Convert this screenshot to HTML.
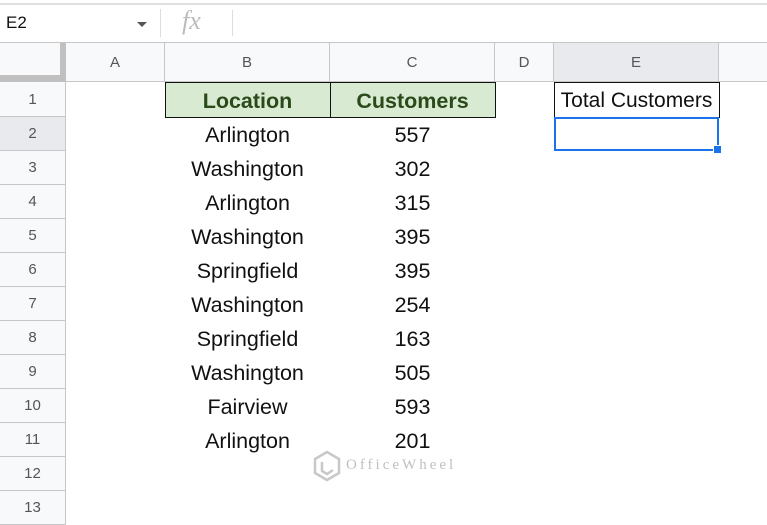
<!DOCTYPE html>
<html><head><style>
body{margin:0;width:767px;height:504px;overflow:hidden;background:#fff;font-family:"Liberation Sans",Arial,sans-serif;position:relative}
.a{position:absolute;box-sizing:border-box}
.ch{position:absolute;top:43px;height:39px;background:#f8f9fa;border-right:1px solid #c7c7c7;border-bottom:1px solid #c7c7c7;color:#555;font-size:15px;text-align:center;line-height:39px;box-sizing:border-box}
.rh{position:absolute;left:0;width:66px;height:34px;background:#f8f9fa;border-right:1px solid #c7c7c7;border-bottom:1px solid #c7c7c7;color:#555;font-size:15px;text-align:center;line-height:34px;box-sizing:border-box}
.t{position:absolute;font-size:21.5px;color:#111;text-align:center;height:34px;line-height:36px;white-space:nowrap}
</style></head><body>
<div class="a" style="left:0;top:3px;width:767px;height:2px;background:#e0e0e0"></div>
<div class="a" style="left:6px;top:13px;font-size:17px;color:#111">E2</div>
<div class="a" style="left:137px;top:22px;width:0;height:0;border-left:5px solid transparent;border-right:5px solid transparent;border-top:5px solid #555"></div>
<div class="a" style="left:160px;top:9px;width:1px;height:28px;background:#ddd"></div>
<div class="a" style="left:182px;top:6px;font-size:26px;font-style:italic;color:#bbb;font-family:'Liberation Serif',serif">fx</div>
<div class="a" style="left:232px;top:10px;width:1px;height:26px;background:#ddd"></div>
<div class="a" style="left:0;top:42px;width:767px;height:1px;background:#c7c7c7"></div>
<div class="ch" style="left:0;width:66px;background:#f8f9fa;border:none"></div>
<div class="a" style="left:60px;top:43px;width:6px;height:39px;background:#c0c0c0"></div>
<div class="a" style="left:0;top:75px;width:66px;height:7px;background:#c0c0c0"></div>
<div class="ch" style="left:66px;width:99px">A</div>
<div class="ch" style="left:165px;width:165px">B</div>
<div class="ch" style="left:330px;width:165px">C</div>
<div class="ch" style="left:495px;width:59px">D</div>
<div class="ch" style="left:554px;width:165px;background:#e8eaed">E</div>
<div class="ch" style="left:719px;width:60px"></div>
<div class="rh" style="top:82px;height:35px;line-height:35px">1</div>
<div class="rh" style="top:117px;background:#e8eaed">2</div>
<div class="rh" style="top:151px">3</div>
<div class="rh" style="top:185px">4</div>
<div class="rh" style="top:219px">5</div>
<div class="rh" style="top:253px">6</div>
<div class="rh" style="top:287px">7</div>
<div class="rh" style="top:321px">8</div>
<div class="rh" style="top:355px">9</div>
<div class="rh" style="top:389px">10</div>
<div class="rh" style="top:423px">11</div>
<div class="rh" style="top:457px">12</div>
<div class="rh" style="top:491px">13</div>
<div class="a" style="left:165px;top:82px;width:166px;height:36px;background:#d9ead3;border:1px solid #111"></div>
<div class="a" style="left:330px;top:82px;width:166px;height:36px;background:#d9ead3;border:1px solid #111"></div>
<div class="t" style="left:165px;top:83px;width:165px;font-weight:bold;color:#2a4a1a">Location</div>
<div class="t" style="left:330px;top:83px;width:165px;font-weight:bold;color:#2a4a1a">Customers</div>
<div class="a" style="left:554px;top:82px;width:166px;height:36px;border:1px solid #111;border-bottom:none"></div>
<div class="t" style="left:554px;top:83px;width:165px;font-size:21px">Total Customers</div>
<div class="a" style="left:554px;top:117px;width:165px;height:34px;border:2px solid #1a73e8"></div>
<div class="a" style="left:713px;top:145px;width:9px;height:9px;background:#1a73e8;border:1px solid #fff"></div>
<div class="t" style="left:165px;top:117px;width:165px">Arlington</div><div class="t" style="left:330px;top:117px;width:165px">557</div>
<div class="t" style="left:165px;top:151px;width:165px">Washington</div><div class="t" style="left:330px;top:151px;width:165px">302</div>
<div class="t" style="left:165px;top:185px;width:165px">Arlington</div><div class="t" style="left:330px;top:185px;width:165px">315</div>
<div class="t" style="left:165px;top:219px;width:165px">Washington</div><div class="t" style="left:330px;top:219px;width:165px">395</div>
<div class="t" style="left:165px;top:253px;width:165px">Springfield</div><div class="t" style="left:330px;top:253px;width:165px">395</div>
<div class="t" style="left:165px;top:287px;width:165px">Washington</div><div class="t" style="left:330px;top:287px;width:165px">254</div>
<div class="t" style="left:165px;top:321px;width:165px">Springfield</div><div class="t" style="left:330px;top:321px;width:165px">163</div>
<div class="t" style="left:165px;top:355px;width:165px">Washington</div><div class="t" style="left:330px;top:355px;width:165px">505</div>
<div class="t" style="left:165px;top:389px;width:165px">Fairview</div><div class="t" style="left:330px;top:389px;width:165px">593</div>
<div class="t" style="left:165px;top:423px;width:165px">Arlington</div><div class="t" style="left:330px;top:423px;width:165px">201</div>
<svg class="a" style="left:312px;top:450px" width="30" height="32" viewBox="0 0 30 32"><path d="M15 2 L27 9 V23 L15 30 L3 23 V9 Z" fill="none" stroke="#c8c8c8" stroke-width="2.5"/><path d="M10 12 V21 L15 24 L21 20" fill="none" stroke="#c8c8c8" stroke-width="2.5"/></svg>
<div class="a" style="left:346px;top:457px;font-size:15px;letter-spacing:3px;color:#c0c0c0;font-family:'Liberation Serif',serif">OfficeWheel</div>
</body></html>
